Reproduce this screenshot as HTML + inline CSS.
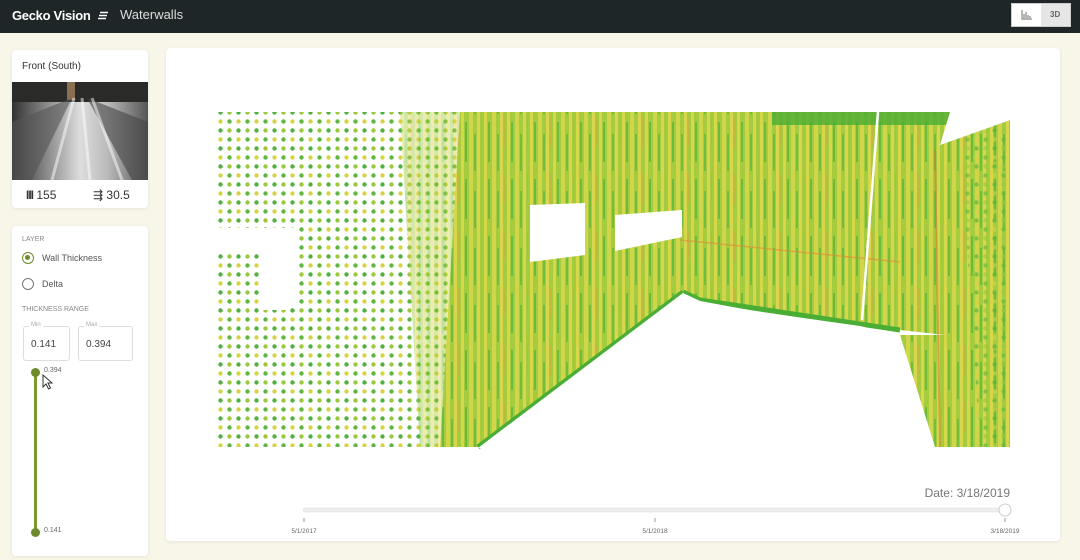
<!DOCTYPE html>
<html><head><meta charset="utf-8"><style>
*{margin:0;padding:0;box-sizing:border-box}
body{width:1080px;height:560px;background:#f8f6e8;font-family:"Liberation Sans",sans-serif;position:relative;overflow:hidden}
.hdr{position:absolute;left:0;top:0;width:1080px;height:33px;background:#1e2627;color:#fff}
.card{position:absolute;background:#fff;border-radius:4px;box-shadow:0 1px 3px rgba(0,0,0,.08)}
.t{position:absolute;white-space:nowrap}
</style></head><body>
<div class="hdr">
 <div class="t" style="left:12px;top:8px;font-size:13px;font-weight:bold;letter-spacing:-.3px">Gecko Vision</div>
 <svg class="t" style="left:97px;top:11px" width="12" height="9"><path d="M3 1.5H11M2 4.5H10M1 7.5H9" stroke="#fff" stroke-width="1.6"/></svg>
 <div class="t" style="left:120px;top:7px;font-size:13px;color:#ddd">Waterwalls</div>
 <div style="position:absolute;left:1011px;top:3px;width:60px;height:24px;background:#e6e6e6;border:1px solid #ccc"></div>
 <div style="position:absolute;left:1012px;top:4px;width:29px;height:22px;background:#fff"></div>
 <svg class="t" style="left:1021px;top:10px" width="12" height="10"><path d="M1 0V9H11M3 8V4M5 8V2M7 8V5M9 8V6" stroke="#888" stroke-width="1.2" fill="none"/></svg>
 <div class="t" style="left:1050px;top:10px;font-size:8px;color:#666;font-weight:bold">3D</div>
</div>

<div class="card" style="left:12px;top:50px;width:136px;height:158px">
 <div class="t" style="left:10px;top:11px;font-size:10px;color:#333">Front (South)</div>
 <svg style="position:absolute;left:0;top:32px" width="136" height="98">
  <defs><linearGradient id="p" x1="0" x2="1"><stop offset="0" stop-color="#333"/><stop offset=".3" stop-color="#999"/><stop offset=".5" stop-color="#ddd"/><stop offset=".7" stop-color="#bbb"/><stop offset="1" stop-color="#555"/></linearGradient></defs>
  <rect width="136" height="98" fill="url(#p)"/>
  <rect width="136" height="20" fill="#2a2a28"/>
  <rect x="55" y="0" width="8" height="18" fill="#8a7050"/>
  <path d="M0 40L60 16L20 98H0Z" fill="#555" opacity=".6"/>
  <path d="M136 40L75 16L120 98H136Z" fill="#444" opacity=".6"/>
  <path d="M62 16L40 98M70 16L78 98M80 16L110 98" stroke="#fff" stroke-width="3" opacity=".5"/>
 </svg>
 <div class="t" style="left:14px;top:138px;font-size:12px;color:#333"><b style="letter-spacing:-1px">III</b> 155</div>
 <div class="t" style="left:81px;top:138px;font-size:12px;color:#333">⇶ 30.5</div>
</div>

<div class="card" style="left:12px;top:226px;width:136px;height:330px">
 <div class="t" style="left:10px;top:10px;font-size:7px;color:#888">LAYER</div>
 <div style="position:absolute;left:10px;top:26px;width:12px;height:12px;border:1.5px solid #6d8a2c;border-radius:50%"><div style="margin:2px;width:5px;height:5px;background:#6d8a2c;border-radius:50%"></div></div>
 <div class="t" style="left:30px;top:27px;font-size:9px;color:#555">Wall Thickness</div>
 <div style="position:absolute;left:10px;top:52px;width:12px;height:12px;border:1.2px solid #777;border-radius:50%"></div>
 <div class="t" style="left:30px;top:53px;font-size:9px;color:#555">Delta</div>
 <div class="t" style="left:10px;top:80px;font-size:7px;color:#888">THICKNESS RANGE</div>
 <div style="position:absolute;left:11px;top:100px;width:47px;height:35px;border:1px solid #ddd;border-radius:3px"></div>
 <div class="t" style="left:17px;top:96px;font-size:6px;color:#aaa;background:#fff;padding:0 2px">Min</div>
 <div class="t" style="left:19px;top:113px;font-size:10px;color:#444">0.141</div>
 <div style="position:absolute;left:66px;top:100px;width:55px;height:35px;border:1px solid #ddd;border-radius:3px"></div>
 <div class="t" style="left:72px;top:96px;font-size:6px;color:#aaa;background:#fff;padding:0 2px">Max</div>
 <div class="t" style="left:74px;top:113px;font-size:10px;color:#444">0.394</div>
 <div style="position:absolute;left:22px;top:148px;width:3px;height:160px;background:#7a9a30"></div>
 <div style="position:absolute;left:19px;top:142px;width:9px;height:9px;background:#6d8a2c;border-radius:50%"></div>
 <div style="position:absolute;left:19px;top:302px;width:9px;height:9px;background:#6d8a2c;border-radius:50%"></div>
 <div class="t" style="left:32px;top:141px;font-size:7px;color:#666">0.394</div>
 <div class="t" style="left:32px;top:301px;font-size:7px;color:#666">0.141</div>
 <svg class="t" style="left:30px;top:148px" width="12" height="16"><path d="M1 1V13L4 10L6.5 15L8.5 14L6 9H10Z" fill="#fff" stroke="#333" stroke-width="1"/></svg>
</div>

<div class="card" style="left:166px;top:48px;width:894px;height:493px">
 <svg style="position:absolute;left:0;top:0" width="894" height="493">
  <defs>
   <pattern id="stripes" width="23" height="57" patternUnits="userSpaceOnUse">
    <rect width="23" height="57" fill="#a4cc3e"/>
    <rect x="1" width="3" height="57" fill="#d6d84a"/>
    <rect x="5" y="8" width="2" height="40" fill="#6cbb3c"/>
    <rect x="9" width="4" height="57" fill="#cfd64a"/>
    <rect x="14" y="20" width="2" height="37" fill="#72be3c"/>
    <rect x="17" width="3" height="57" fill="#e4d850" opacity=".8"/>
    <rect x="21" y="3" width="1" height="30" fill="#e89a3e" opacity=".4"/>
   </pattern>
   <pattern id="dots" width="18" height="18" patternUnits="userSpaceOnUse">
    <circle cx="4.5" cy="4.5" r="2.2" fill="#4fb23e"/>
    <circle cx="13.5" cy="4.5" r="2.2" fill="#9cc83e"/>
    <circle cx="4.5" cy="13.5" r="2.2" fill="#d6d444"/>
    <circle cx="13.5" cy="13.5" r="2.2" fill="#5cb640"/>
   </pattern>
  </defs>
  <g transform="translate(-166,-48)">
   <path d="M218 112H480V447H218Z" fill="url(#dots)"/>
   <path d="M400 112H480V447H420Z" fill="url(#stripes)" opacity=".45"/>
   <path d="M460 112H950L945 140V335L900 330L860 322L760 310L700 300L683 292L478 447H440Z" fill="url(#stripes)"/>
   <path d="M683 292L700 300L900 330" stroke="#4aad34" stroke-width="5" fill="none"/>
   <path d="M478 447L683 292" stroke="#4aad34" stroke-width="5"/>
   <path d="M680 240L900 262" stroke="#e08a3a" stroke-width="1.5" opacity=".6"/>
   <path d="M772 112H950V125H772Z" fill="#4aad34" opacity=".8"/>
   <path d="M878 112L862 320" stroke="#fff" stroke-width="2.5"/>
   <path d="M940 145L1010 120V447H935L900 335L945 335Z" fill="url(#stripes)"/>
   <path d="M960 140L1010 122V447H980Z" fill="url(#dots)" opacity=".6"/>
   <path d="M935 150L940 447" stroke="#e07030" stroke-width="2" opacity=".5"/>
   <path d="M478 448L683 293L700 301L760 312L860 326L900 336L935 448Z" fill="#fff"/>
   <path d="M530 205L585 203V255L530 262Z" fill="#fff"/>
   <path d="M615 215L682 210V237L615 251Z" fill="#fff"/>
   <path d="M218 228H298V300L290 310H262V250H218Z" fill="#fff"/>
   <path d="M950 112H1010V120L940 145Z" fill="#fff"/>
  </g>
  <g transform="translate(-166,-48)" font-family="Liberation Sans" fill="#666">
   <text x="1010" y="497" font-size="12" text-anchor="end" fill="#777">Date: 3/18/2019</text>
   <rect x="303" y="508" width="703" height="4" rx="2" fill="#eee" stroke="#ddd" stroke-width=".5"/>
   <circle cx="1005" cy="510" r="6" fill="#fff" stroke="#ccc"/>
   <path d="M304 518V522M655 518V522M1005 518V522" stroke="#999"/>
   <text x="304" y="533" font-size="6.5" text-anchor="middle">5/1/2017</text>
   <text x="655" y="533" font-size="6.5" text-anchor="middle">5/1/2018</text>
   <text x="1005" y="533" font-size="6.5" text-anchor="middle">3/18/2019</text>
  </g>
 </svg>
</div>
</body></html>
